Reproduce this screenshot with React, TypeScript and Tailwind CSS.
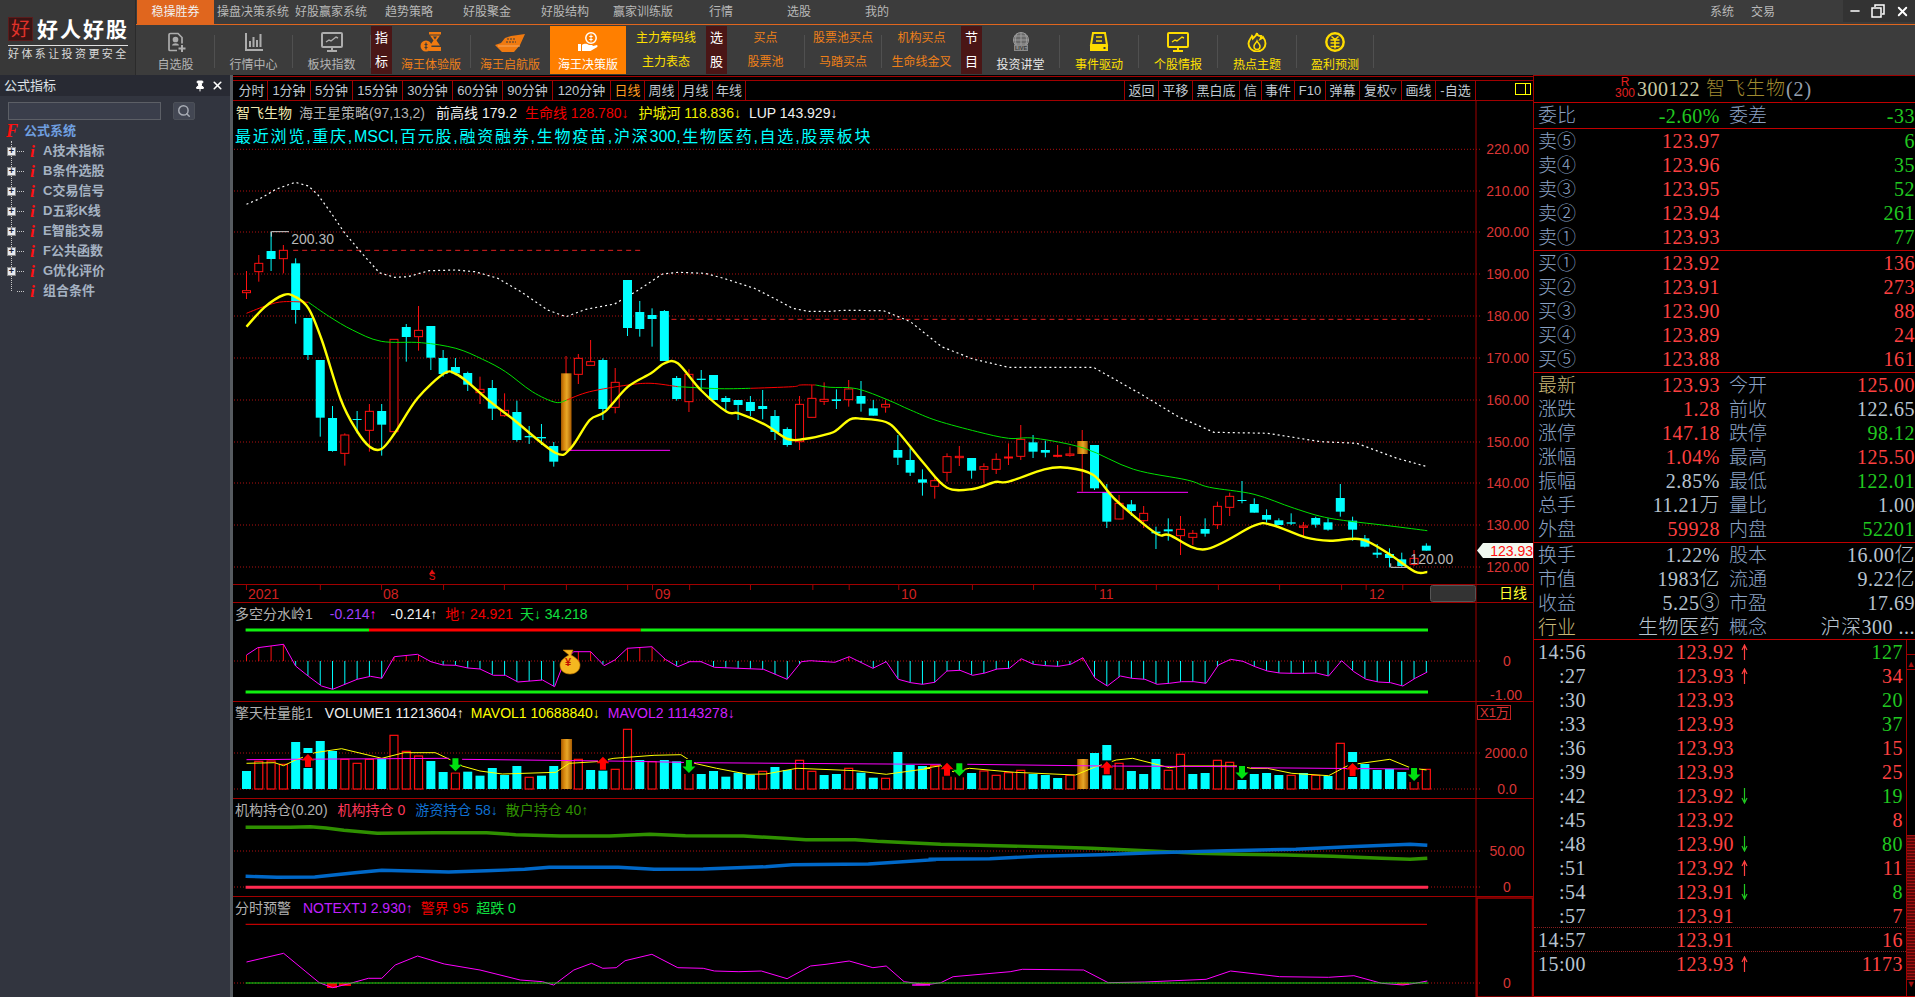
import { Minus, X as XIcon, Pin, Search } from "lucide-react";

// zoom -> page coords
const xi = (i: number) => 246.5 + 12.29 * i;
const X4 = (x: number) => 230 + x / 2.613;
const X5 = (x: number) => 830 + x / 2.24;
const X8 = (x: number) => 230 + x / 2.24;
const X9 = (x: number) => 900 + x / 2.45;
const M = (y: number) => 100 + y / 3;
const S = (y: number) => 600 + y / 3;

type P = [number, number];
const toPts = (a: number[], fx: (n: number) => number, fy: (n: number) => number) => {
  const out: P[] = [];
  for (let i = 0; i < a.length; i += 2) out.push([fx(a[i]), fy(a[i + 1])]);
  return out;
};
const str = (p: P[]) => p.map((q) => `${q[0].toFixed(1)},${q[1].toFixed(1)}`).join(" ");
// catmull-rom through the read-off points
const smooth = (p: P[]) => {
  let d = `M${p[0][0].toFixed(1)} ${p[0][1].toFixed(1)}`;
  for (let i = 0; i < p.length - 1; i++) {
    const a = p[i - 1] ?? p[i];
    const b = p[i];
    const c = p[i + 1];
    const e = p[i + 2] ?? c;
    d += ` C${(b[0] + (c[0] - a[0]) / 6).toFixed(1)} ${(b[1] + (c[1] - a[1]) / 6).toFixed(1)} ${(c[0] - (e[0] - b[0]) / 6).toFixed(1)} ${(c[1] - (e[1] - b[1]) / 6).toFixed(1)} ${c[0].toFixed(1)} ${c[1].toFixed(1)}`;
  }
  return d;
};
const interp = (p: P[], x: number) => {
  for (let i = 1; i < p.length; i++) {
    if (x <= p[i][0]) {
      const t = (x - p[i - 1][0]) / (p[i][0] - p[i - 1][0] || 1);
      return p[i - 1][1] + t * (p[i][1] - p[i - 1][1]);
    }
  }
  return p[p.length - 1][1];
};

// top, bottom, wick hi, wick lo, 0 red / 1 cyan / 2 orange
const candles: number[][] = [
  [572, 578, 513, 597, 0], [490, 515, 465, 545, 0], [453, 477, 395, 513, 1], [451, 476, 435, 520, 0],
  [490, 630, 475, 671, 1], [654, 765, 654, 780, 1], [780, 953, 780, 1010, 1], [954, 1053, 918, 1055, 1],
  [1005, 1060, 1000, 1097, 0], [957, 960, 933, 1000, 1], [934, 991, 912, 1055, 0], [933, 974, 912, 1067, 1],
  [718, 995, 718, 995, 0], [681, 711, 672, 785, 1], [691, 710, 618, 752, 0], [678, 773, 678, 810, 1],
  [774, 822, 750, 830, 1], [801, 820, 774, 822, 1], [819, 854, 815, 873, 1], [868, 878, 830, 912, 0],
  [864, 926, 840, 960, 1], [931, 947, 880, 950, 0], [936, 1020, 902, 1025, 1], [1008, 1012, 978, 1032, 1],
  [1011, 1015, 972, 1035, 1], [1038, 1085, 1026, 1100, 1], [820, 1052, 768, 1052, 2], [775, 823, 762, 852, 0],
  [785, 796, 720, 796, 0], [780, 927, 775, 960, 1], [847, 922, 804, 940, 0], [540, 684, 540, 708, 1],
  [636, 687, 603, 710, 1], [645, 657, 625, 740, 1], [633, 783, 630, 783, 1], [834, 897, 828, 902, 1],
  [823, 905, 808, 936, 0], [836, 840, 810, 870, 1], [825, 900, 825, 900, 1], [894, 906, 888, 935, 1],
  [900, 915, 900, 960, 1], [906, 933, 888, 948, 1], [918, 927, 870, 958, 1], [948, 996, 930, 1020, 1],
  [987, 1035, 982, 1040, 1], [913, 1025, 888, 1050, 0], [895, 952, 855, 952, 0], [898, 904, 847, 915, 0],
  [898, 903, 868, 927, 1], [867, 899, 840, 920, 0], [888, 911, 843, 935, 1], [925, 947, 900, 947, 1],
  [913, 921, 900, 938, 0], [1050, 1073, 1005, 1095, 1], [1080, 1118, 1045, 1128, 1], [1138, 1148, 1108, 1187, 1],
  [1142, 1159, 1130, 1196, 0], [1070, 1117, 1060, 1145, 0], [1069, 1073, 1038, 1098, 0], [1074, 1112, 1074, 1136, 1],
  [1100, 1108, 1090, 1150, 0], [1078, 1108, 1060, 1122, 0], [1071, 1073, 1030, 1095, 0], [1018, 1069, 975, 1080, 0],
  [1027, 1055, 1005, 1074, 1], [1050, 1058, 1022, 1072, 1], [1066, 1069, 1035, 1072, 0], [1062, 1066, 1040, 1070, 0],
  [1023, 1062, 990, 1175, 2], [1035, 1165, 1035, 1170, 1], [1176, 1265, 1152, 1284, 1], [1210, 1257, 1185, 1258, 0],
  [1213, 1233, 1200, 1248, 1], [1240, 1262, 1218, 1284, 0], [1295, 1300, 1280, 1347, 1], [1288, 1294, 1255, 1322, 1],
  [1288, 1307, 1248, 1365, 0], [1300, 1312, 1290, 1335, 0], [1287, 1301, 1255, 1310, 1], [1219, 1274, 1205, 1287, 0],
  [1189, 1222, 1178, 1248, 0], [1200, 1203, 1143, 1210, 1], [1212, 1238, 1195, 1238, 1], [1245, 1259, 1228, 1268, 1],
  [1261, 1275, 1255, 1275, 1], [1267, 1271, 1240, 1275, 1], [1278, 1282, 1266, 1310, 0], [1254, 1274, 1250, 1283, 1],
  [1267, 1289, 1255, 1292, 1], [1194, 1235, 1152, 1250, 1], [1262, 1289, 1250, 1322, 1], [1315, 1340, 1305, 1342, 1],
  [1358, 1364, 1332, 1374, 1], [1362, 1374, 1345, 1402, 1], [1378, 1398, 1358, 1400, 1], [1375, 1393, 1350, 1398, 0],
  [1337, 1352, 1330, 1352, 1],
];

const whiteLine = [
  ...toPts([43, 313, 80, 295, 120, 268, 170, 247, 205, 258, 230, 285, 265, 340, 300, 400, 345, 460, 390, 518, 430, 532, 465, 530, 520, 512, 590, 510, 640, 515, 700, 535, 760, 575, 830, 630, 878, 650, 930, 628, 1005, 612, 1060, 575, 1130, 522, 1170, 517, 1240, 520, 1290, 535, 1370, 565, 1430, 600, 1470, 625, 1510, 634, 1568, 634], X4, M),
  ...toPts([30, 631, 120, 632, 180, 665, 250, 740, 320, 777, 400, 802, 590, 802, 700, 885, 780, 950, 860, 997, 980, 1000, 1100, 1025, 1180, 1030, 1270, 1075, 1338, 1100], X5, M),
];
const yellowLine = [
  ...toPts([43, 680, 90, 622, 140, 585, 170, 590, 205, 625, 240, 720, 290, 900, 330, 990, 365, 1040, 396, 1047, 430, 1000, 490, 895, 560, 820, 590, 822, 620, 845, 680, 905, 740, 958, 850, 1058, 890, 1045, 940, 960, 980, 935, 1040, 860, 1100, 820, 1135, 790, 1170, 790, 1230, 870, 1298, 935, 1330, 940, 1400, 975, 1457, 1017, 1500, 1017, 1568, 1000], X4, M),
  ...toPts([15, 990, 45, 958, 70, 956, 125, 966, 155, 1000, 210, 1090, 262, 1163, 320, 1167, 370, 1146, 400, 1145, 480, 1108, 530, 1103, 590, 1125, 640, 1200, 730, 1300, 760, 1305, 840, 1348, 950, 1277, 990, 1275, 1065, 1312, 1120, 1322, 1190, 1318, 1250, 1360, 1310, 1415, 1338, 1416], X5, M),
];
const maParts: { c: string; p: P[] }[] = [
  { c: "#ff0000", p: toPts([43, 640, 100, 615, 140, 605, 205, 607], X4, M) },
  { c: "#00e000", p: toPts([205, 607, 260, 650, 320, 690, 395, 724, 500, 728, 590, 745, 660, 778, 720, 815, 790, 875, 850, 907, 880, 900], X4, M) },
  { c: "#ff0000", p: toPts([880, 900, 940, 875, 1040, 855, 1100, 850, 1170, 860], X4, M) },
  { c: "#00e000", p: toPts([1170, 860, 1280, 866, 1360, 865], X4, M) },
  { c: "#ff0000", p: toPts([1360, 865, 1470, 860, 1490, 855, 1530, 855], X4, M) },
  {
    c: "#00e000",
    p: [
      ...toPts([1530, 855, 1568, 862], X4, M),
      ...toPts([60, 866, 130, 900, 180, 930, 240, 962, 330, 995, 400, 1015, 460, 1015, 570, 1045, 680, 1108, 800, 1140, 850, 1162, 950, 1183, 1040, 1225, 1120, 1255, 1250, 1277, 1338, 1292], X5, M),
    ],
  },
];

const priceLevels: [number, string][] = [
  [149.3, "220.00"], [191, "210.00"], [232, "200.00"], [274, "190.00"], [316, "180.00"], [358, "170.00"],
  [400, "160.00"], [442, "150.00"], [483, "140.00"], [525, "130.00"], [567, "120.00"],
];

function MainChart() {
  return (
    <svg viewBox="233 101 1300 483" className="block h-[483px] w-[1300px]">
      <defs>
        <linearGradient id="gold" x1="0" x2="1" y1="0" y2="0">
          <stop offset="0" stopColor="#a85a00" />
          <stop offset="0.3" stopColor="#d98a10" />
          <stop offset="0.55" stopColor="#e8a828" />
          <stop offset="1" stopColor="#a85a00" />
        </linearGradient>
      </defs>
      {priceLevels.map(([y, t]) => (
        <g key={t}>
          <line x1={234} x2={1482} y1={y} y2={y} stroke="#b01010" strokeDasharray="1 2" />
          <text x={1529} y={y + 5} textAnchor="end" fontSize={14} fill="#d83535">{t}</text>
        </g>
      ))}
      <line x1={1476} x2={1476} y1={101} y2={584} stroke="#a00000" />
      <line x1={X4(165)} x2={X4(1080)} y1={M(451)} y2={M(451)} stroke="#e02020" strokeDasharray="5 4" />
      <line x1={X4(1130)} x2={X5(1345)} y1={M(658)} y2={M(658)} stroke="#e02020" strokeDasharray="5 4" />
      <polyline points={str(whiteLine)} fill="none" stroke="#ffffff" strokeWidth={1.2} strokeDasharray="2 3" />
      {candles.map((c, i) => {
        const x = xi(i);
        const top = M(c[0]);
        const bot = M(c[1]);
        const col = c[4] === 1 ? "#00ffff" : "#ff1010";
        return (
          <g key={i}>
            <line x1={x} x2={x} y1={M(c[2])} y2={M(c[3])} stroke={col} />
            {c[4] === 1 && <rect x={x - 4.5} y={top} width={9} height={Math.max(bot - top, 1)} fill="#00ffff" />}
            {c[4] === 0 && <rect x={x - 4} y={top} width={8} height={Math.max(bot - top, 1)} fill="#000" stroke="#ff1010" />}
            {c[4] === 2 && <rect x={x - 5} y={top} width={10.5} height={bot - top} fill="url(#gold)" />}
          </g>
        );
      })}
      <line x1={X4(880)} x2={X4(1150)} y1={M(1051)} y2={M(1051)} stroke="#ff00ff" />
      <line x1={X5(553)} x2={X5(802)} y1={M(1177)} y2={M(1177)} stroke="#ff00ff" />
      {maParts.map((m, i) => (
        <path key={i} d={smooth(m.p)} fill="none" stroke={m.c} />
      ))}
      <path d={smooth(yellowLine)} fill="none" stroke="#ffff00" strokeWidth={2.4} />
      <polyline points={`${X4(108)},${M(410)} ${X4(108)},${M(395)} ${X4(154)},${M(395)}`} fill="none" stroke="#d0d0d0" />
      <text x={X4(160)} y={M(431)} fontSize={14} fill="#b8b8b8">200.30</text>
      <polyline points={`${X5(1256)},${M(1390)} ${X5(1256)},${M(1402)} ${X5(1292)},${M(1402)}`} fill="none" stroke="#d0d0d0" />
      <text x={X5(1300)} y={M(1392)} fontSize={14} fill="#b8b8b8">120.00</text>
      <path d={`M${X4(528)} ${M(1408)} l3 5 h-6 z`} fill="#e01010" />
      <text x={X4(528)} y={M(1440)} textAnchor="middle" fontSize={10} fill="#e01010">S</text>
      <path d="M1477 550.5 l6 -7.5 h50 v15 h-50 z" fill="#f0f8f0" />
      <text x={1533} y={555.5} textAnchor="end" fontSize={14} fill="#ff1010">123.93</text>
    </svg>
  );
}

function TimeAxis() {
  const ticks = [X4(43), X4(236), X4(396), X4(558), X4(717), X4(879), X4(1039), X4(1104), X4(1201), X4(1360), X4(1523), X5(43), X5(154), X5(319), X5(456), X5(595), X5(731), X5(870), X5(1007), X5(1146), X5(1201), X5(1283)];
  const labels: [number, string][] = [[248, "2021"], [383, "08"], [655, "09"], [901, "10"], [1099, "11"], [1369, "12"]];
  return (
    <div className="relative h-[19px] w-[1300px] border-y border-[#a00000]">
      <svg viewBox="233 585 1300 17" className="block h-[17px] w-[1300px]">
        {ticks.map((t, i) => (
          <line key={i} x1={t} x2={t} y1={585} y2={590} stroke="#a00000" />
        ))}
        {labels.map(([x, t]) => (
          <text key={t} x={x} y={599} fontSize={14} fill="#d02020">{t}</text>
        ))}
        <line x1={1476} x2={1476} y1={585} y2={602} stroke="#a00000" />
        <rect x={1430.5} y={585.5} width={45} height={16} rx={2} fill="#333" stroke="#555" />
      </svg>
      <span className="absolute right-[6px] top-0 text-[14px] leading-[17px] text-[#ffff30]">日线</span>
    </div>
  );
}

const waterA = [37, 165, 62, 143, 120, 133, 147, 198, 175, 228, 205, 258, 230, 268, 285, 238, 315, 229, 340, 235, 368, 170, 420, 163, 450, 185, 477, 195, 505, 196, 533, 204, 560, 207, 590, 226, 617, 226, 645, 246, 700, 240, 727, 260, 750, 180, 770, 155, 808, 155, 838, 197, 862, 180, 890, 145, 945, 140, 975, 178, 1003, 200, 1030, 185, 1055, 185, 1085, 202, 1140, 205, 1195, 208, 1248, 238, 1280, 185, 1300, 182, 1355, 187, 1387, 170, 1440, 205, 1470, 185, 1497, 238, 1525, 248];
const waterB = [55, 253, 85, 247, 115, 213, 147, 211, 178, 226, 208, 219, 238, 207, 268, 205, 297, 176, 327, 193, 357, 197, 388, 199, 418, 193, 448, 173, 478, 235, 508, 258, 540, 228, 568, 235, 600, 238, 630, 253, 660, 250, 690, 245, 720, 245, 750, 250, 780, 195, 810, 178, 840, 184, 870, 200, 900, 213, 930, 219, 960, 220, 990, 220, 1020, 219, 1050, 228, 1082, 182, 1112, 215, 1142, 238, 1172, 246, 1202, 248, 1232, 258, 1262, 235, 1292, 216];

function Pane({ h, legend, children, last }: { h: number; legend: React.ReactNode; children: React.ReactNode; last?: boolean }) {
  const top = { 99: 603, 97: 702, 98: 799, 100: 897 }[h] as number;
  return (
    <div className={`relative w-[1300px] ${last ? "" : "border-b border-[#a00000]"}`} style={{ height: h }}>
      <svg viewBox={`233 ${top} 1300 ${h}`} className="block w-[1300px]" style={{ height: h }}>
        <line x1={1476} x2={1476} y1={top} y2={top + h} stroke="#a00000" />
        {children}
      </svg>
      <div className="absolute left-[2px] top-[2px] flex h-[19px] items-center whitespace-nowrap text-[14px]">{legend}</div>
    </div>
  );
}

const AxisText = ({ x = 1522, y, t, anchor = "end" }: { x?: number; y: number; t: string; anchor?: "end" | "middle" }) => (
  <text x={x} y={y + 5} textAnchor={anchor} fontSize={14} fill="#d83535">{t}</text>
);
const Dotted = ({ y, x2 = 1482 }: { y: number; x2?: number }) => (
  <line x1={234} x2={x2} y1={y} y2={y} stroke="#b01010" strokeDasharray="1 2" />
);

function WaterPane() {
  const pts = [...toPts(waterA, X8, S), ...toPts(waterB, X9, S)];
  return (
    <Pane
      h={99}
      legend={
        <>
          <span className="text-[#b0b0b0]">多空分水岭1</span>
          <span className="ml-[17px] text-[#a040ff]">-0.214<span className="text-[#ff00ff]">↑</span></span>
          <span className="ml-[14px] text-[#f0f0f0]">-0.214↑</span>
          <span className="ml-[8px] text-[#f00000]">地↑ 24.921</span>
          <span className="ml-[7px] text-[#10e040]">天↓ 34.218</span>
        </>
      }
    >
      <Dotted y={661} />
      {candles.map((_, i) => {
        const y = interp(pts, xi(i));
        return <line key={i} x1={xi(i)} x2={xi(i)} y1={661} y2={y} stroke={y < 661 ? "#ff1010" : "#00ffff"} />;
      })}
      <polyline points={str(pts)} fill="none" stroke="#ff00ff" />
      <line x1={245.6} x2={369} y1={630} y2={630} stroke="#10f010" strokeWidth={3} />
      <line x1={369} x2={640.7} y1={630} y2={630} stroke="#ff0000" strokeWidth={3} />
      <line x1={640.7} x2={1428} y1={630} y2={630} stroke="#10f010" strokeWidth={3} />
      <line x1={245.6} x2={1428} y1={692} y2={692} stroke="#10f010" strokeWidth={3} />
      <g transform="translate(568 660)">
        <path d="M-5 -10 h10 l-2 5 c6 3 9 7 9 10 c0 6 -5 9 -10 9 c-5 0 -10 -3 -10 -9 c0 -3 3 -7 9 -10 z" fill="#f5b820" stroke="#c87a00" strokeWidth={0.6} />
        <text x={0} y={6} textAnchor="middle" fontSize={11} fontWeight={700} fill="#c01000">¥</text>
      </g>
      <AxisText x={1507} y={661} t="0" anchor="middle" />
      <AxisText y={695} t="-1.00" />
    </Pane>
  );
}

// top y in zoom units, 0 red / 1 cyan / 2 orange
const vols: [number, number][] = [
  [513, 1], [484, 0], [483, 0], [493, 0], [426, 1], [444, 1], [423, 1], [453, 1], [478, 0], [490, 0], [478, 0], [476, 1],
  [406, 0], [454, 0], [468, 0], [483, 1], [516, 1], [519, 0], [515, 1], [527, 1], [504, 1], [525, 1], [498, 1], [532, 0],
  [527, 1], [498, 1], [417, 2], [478, 0], [510, 1], [510, 1], [508, 0], [388, 0], [480, 1], [485, 0], [480, 1], [484, 1],
  [519, 0], [522, 1], [513, 1], [530, 1], [518, 1], [524, 1], [514, 0], [501, 1], [510, 1], [481, 0], [514, 0], [525, 1],
  [522, 1], [505, 0], [518, 1], [533, 1], [535, 0], [456, 1], [495, 1], [498, 1], [497, 0], [525, 0], [528, 0], [519, 1],
  [513, 0], [526, 0], [518, 0], [511, 0], [522, 1], [525, 1], [534, 1], [526, 0], [477, 2], [459, 1], [435, 1], [490, 0],
  [513, 1], [522, 1], [477, 1], [511, 0], [463, 0], [522, 1], [519, 1], [481, 0], [487, 0], [537, 1], [522, 1], [519, 1],
  [525, 1], [526, 0], [519, 1], [526, 0], [528, 1], [430, 0], [456, 1], [492, 1], [510, 1], [507, 1], [516, 1], [543, 0], [508, 0],
];
const arrows: [number, number, number][] = [
  [5, 462, 1], [29, 470, 1], [57, 488, 1], [70, 484, 1], [90, 489, 1],
  [17, 475, 0], [36, 480, 0], [58, 490, 0], [81, 498, 0], [95, 504, 0],
];

function VolumePane() {
  const yellow = [
    ...toPts([37, 490, 100, 488, 120, 497, 147, 480, 190, 458, 250, 446, 340, 475, 390, 458, 460, 458, 495, 480, 520, 498, 560, 513, 610, 522, 730, 517, 760, 490, 820, 485, 860, 475, 950, 466, 1010, 464, 1040, 490, 1090, 505, 1160, 523, 1200, 522, 1270, 505, 1400, 512, 1470, 523, 1568, 505], X8, S),
    ...toPts([60, 505, 100, 497, 130, 515, 170, 505, 280, 517, 430, 525, 480, 500, 530, 480, 570, 475, 660, 503, 690, 498, 830, 498, 860, 505, 900, 505, 960, 520, 1050, 527, 1100, 495, 1130, 490, 1200, 478, 1250, 503, 1290, 510], X9, S),
  ];
  const mags = [
    toPts([37, 479, 135, 478, 490, 475], X8, S),
    [...toPts([520, 478, 900, 484, 1045, 488, 1568, 493], X8, S), ...toPts([100, 493], X9, S)],
    toPts([165, 493, 500, 498, 830, 500], X9, S),
    toPts([860, 503, 1250, 507], X9, S),
  ];
  return (
    <Pane
      h={97}
      legend={
        <>
          <span className="text-[#b0b0b0]">擎天柱量能1</span>
          <span className="ml-[12px] text-[#f0f0f0]">VOLUME1 11213604↑</span>
          <span className="ml-[7px] text-[#ffff00]">MAVOL1 10688840↓</span>
          <span className="ml-[8px] text-[#d020ff]">MAVOL2 11143278↓</span>
        </>
      }
    >
      <Dotted y={753} />
      <Dotted y={789} />
      {vols.map(([t, c], i) => {
        const x = xi(i);
        const y = S(t);
        if (c === 1) return <rect key={i} x={x - 4.5} y={y} width={9} height={789 - y} fill="#00ffff" />;
        if (c === 2) return <rect key={i} x={x - 5} y={y} width={11} height={789 - y} fill="url(#gold)" />;
        return <rect key={i} x={x - 4} y={y} width={8} height={789 - y} fill="#000" stroke="#ff1010" strokeWidth={1.2} />;
      })}
      <polyline points={str(yellow)} fill="none" stroke="#ffff00" />
      {mags.map((m, i) => (
        <polyline key={i} points={str(m)} fill="none" stroke="#ff00ff" />
      ))}
      {arrows.map(([i, t, up]) => {
        const x = xi(i);
        const y = S(t);
        const d = up
          ? `M${x} ${y} l6.5 6.5 h-3.5 v6.5 h-6 v-6.5 h-3.5 z`
          : `M${x} ${y + 13} l6.5 -6.5 h-3.5 v-6.5 h-6 v6.5 h-3.5 z`;
        return (
          <g key={i}>
            <rect x={x - 5} y={y - 1} width={10} height={15} fill="#000" />
            <path d={d} fill={up ? "#ff0000" : "#00e010"} />
          </g>
        );
      })}
      <AxisText x={1506} y={753} t="2000.0" anchor="middle" />
      <AxisText x={1507} y={789} t="0.0" anchor="middle" />
      <rect x={1477.5} y={705.5} width={33} height={14} fill="none" stroke="#c02020" />
      <text x={1480} y={717} fontSize={13} fill="#d83535">X1万</text>
    </Pane>
  );
}

function HoldPane() {
  const green = [
    ...toPts([35, 682, 135, 682, 180, 680, 215, 684, 255, 691, 330, 700, 460, 698, 575, 698, 640, 704, 740, 708, 850, 708, 940, 703, 1020, 707, 1150, 708, 1240, 715, 1290, 719, 1400, 719, 1450, 724, 1568, 731], X8, S),
    ...toPts([100, 733, 240, 737, 370, 741, 470, 745, 615, 753, 730, 760, 830, 763, 945, 765, 1060, 769, 1180, 775, 1250, 778, 1292, 775], X9, S),
  ];
  const blue = [
    ...toPts([35, 829, 105, 832, 190, 831, 280, 818, 340, 811, 490, 816, 575, 812, 660, 808, 715, 802, 870, 802, 950, 808, 1060, 807, 1200, 800, 1260, 794, 1430, 792, 1568, 780], X8, S),
    ...toPts([70, 778, 220, 776, 340, 769, 490, 764, 620, 758, 800, 752, 970, 748, 1100, 740, 1250, 733, 1292, 736], X9, S),
  ];
  return (
    <Pane
      h={98}
      legend={
        <>
          <span className="text-[#b0b0b0]">机构持仓(0.20)</span>
          <span className="ml-[10px] text-[#ff3858]">机构持仓 0</span>
          <span className="ml-[10px] text-[#1070d0]">游资持仓 58↓</span>
          <span className="ml-[8px] text-[#2f8f00]">散户持仓 40↑</span>
        </>
      }
    >
      <Dotted y={851} />
      <Dotted y={887} />
      <polyline points={str(green)} fill="none" stroke="#2f9000" strokeWidth={3.4} />
      <polyline points={str(blue)} fill="none" stroke="#0068c8" strokeWidth={3.4} />
      <line x1={245.6} x2={1428} y1={887.3} y2={887.3} stroke="#ff2a50" strokeWidth={3} />
      <AxisText x={1507} y={851} t="50.00" anchor="middle" />
      <AxisText x={1507} y={887} t="0" anchor="middle" />
    </Pane>
  );
}

function AlertPane() {
  const mag = [
    ...toPts([37, 1086, 120, 1060, 170, 1115, 200, 1148, 230, 1163, 270, 1150, 310, 1135, 340, 1135, 370, 1095, 420, 1068, 480, 1092, 560, 1110, 650, 1140, 700, 1145, 725, 1155, 770, 1110, 810, 1090, 835, 1105, 865, 1103, 885, 1082, 945, 1063, 1003, 1103, 1060, 1105, 1085, 1113, 1140, 1115, 1190, 1113, 1248, 1136, 1300, 1098, 1335, 1093, 1387, 1083, 1440, 1103, 1470, 1098, 1510, 1145, 1568, 1155], X8, S),
    ...toPts([30, 1155, 60, 1155, 100, 1148, 130, 1130, 270, 1115, 300, 1108, 450, 1110, 510, 1148, 600, 1146, 750, 1138, 810, 1113, 930, 1130, 1050, 1132, 1112, 1127, 1180, 1150, 1232, 1155, 1262, 1150, 1292, 1143], X9, S),
  ];
  return (
    <Pane
      h={100}
      last
      legend={
        <>
          <span className="text-[#b0b0b0]">分时预警</span>
          <span className="ml-[12px] text-[#c020ff]">NOTEXTJ 2.930↑</span>
          <span className="ml-[8px] text-[#f00000]">警界 95</span>
          <span className="ml-[8px] text-[#10e040]">超跌 0</span>
        </>
      }
    >
      <line x1={245.6} x2={1427} y1={924.3} y2={924.3} stroke="#f00000" />
      <Dotted y={983} />
      <rect x={327} y={983} width={10} height={5} fill="#f00000" />
      <rect x={339} y={983} width={12} height={3} fill="#f00000" />
      <rect x={916} y={983} width={14} height={2} fill="#f00000" />
      <rect x={1397} y={983} width={12} height={2} fill="#f00000" />
      <polyline points={str(mag)} fill="none" stroke="#ff00ff" />
      <line x1={245.6} x2={1428} y1={983} y2={983} stroke="#10e010" />
      <rect x={1477} y={898} width={55.5} height={99} fill="none" stroke="#a00000" strokeWidth={1.5} />
      <AxisText x={1507} y={983} t="0" anchor="middle" />
    </Pane>
  );
}

const periods = [
  ["分时", 32], ["1分钟", 43], ["5分钟", 42], ["15分钟", 50], ["30分钟", 50], ["60分钟", 50], ["90分钟", 50],
  ["120分钟", 58], ["日线", 34], ["周线", 34], ["月线", 34], ["年线", 33],
] as [string, number][];
const tools = [
  ["返回", 34], ["平移", 34], ["黑白底", 47], ["信", 22], ["事件", 33], ["F10", 31], ["弹幕", 34], ["复权▿", 42], ["画线", 34], ["-自选", 40],
] as [string, number][];

function PeriodBar() {
  return (
    <div className="flex h-[20px] w-[1300px] border-b border-[#a00000] text-[13px] leading-[19px] text-[#c0c8d0]">
      <div className="w-[3px]" />
      {periods.map(([t, w]) => (
        <div key={t} className={`border-r border-[#a00000] text-center ${t === "日线" ? "text-[#ff9a20]" : ""}`} style={{ width: w }}>
          {t}
        </div>
      ))}
      <div className="flex-1" />
      <div className="flex border-l border-[#a00000]">
        {tools.map(([t, w]) => (
          <div key={t} className="border-r border-[#a00000] text-center" style={{ width: w }}>
            {t}
          </div>
        ))}
      </div>
      <div className="relative w-[57px]">
        <div className="absolute right-[2px] top-[2px] flex h-[12px] w-[16px] justify-end border border-[#ffff00]">
          <div className="h-full w-[5px] border-l border-[#ffff00]" />
        </div>
      </div>
    </div>
  );
}

const treeRows = ["A技术指标", "B条件选股", "C交易信号", "D五彩K线", "E智能交易", "F公共函数", "G优化评价", "组合条件"];

function Sidebar() {
  return (
    <aside className="flex w-[230px] flex-col bg-[#32353f]">
      <div className="flex h-[21px] items-center bg-[#282a33] pl-[4px] pr-[6px] text-[13px] text-[#dfe3e8]">
        <span className="flex-1">公式指标</span>
        <Pin size={12} className="mr-[5px] text-white" fill="#fff" />
        <XIcon size={13} strokeWidth={3} className="text-white" />
      </div>
      <div className="mt-[6px] flex items-center pl-[8px]">
        <div className="h-[18px] w-[153px] border border-[#5c5f66] bg-[#3a3e4b]" />
        <div className="ml-[12px] flex h-[18px] w-[22px] items-center justify-center rounded-[2px] border border-[#4c5058] bg-[#434753]">
          <Search size={14} strokeWidth={2.5} className="text-[#a8acb4]" />
        </div>
      </div>
      <div className="relative mt-[1px]">
        <div className="absolute bottom-[10px] left-[11px] top-[20px] border-l border-dotted border-[#c8c8c8]" />
        <div className="flex h-[20px] items-center pl-[6px] text-[13px] font-bold text-[#6f9fe0]">
          <span className="w-[18px] font-['Liberation_Serif',serif] text-[18px] font-bold italic leading-none text-[#ff1010]">F</span>
          <span>公式系统</span>
        </div>
        {treeRows.map((t, i) => (
          <div key={t} className="relative flex h-[20px] items-center pl-[7px] text-[13px] font-bold text-[#a5b2c2]">
            {i < 7 ? (
              <span className="z-10 flex h-[9px] w-[9px] items-center justify-center border border-[#888] bg-[#e8eaf0] text-[9px] leading-none text-[#223]">+</span>
            ) : (
              <span className="w-[9px]" />
            )}
            <span className="ml-[1px] w-[7px] border-t border-dotted border-[#c8c8c8]" />
            <span className="ml-[6px] w-[13px] font-['Liberation_Serif',serif] text-[17px] font-bold italic leading-none text-[#ff1010]">i</span>
            <span>{t}</span>
          </div>
        ))}
      </div>
    </aside>
  );
}

const menus: [string, number][] = [
  ["操盘决策系统", 78], ["好股赢家系统", 78], ["趋势策略", 78], ["好股聚金", 78], ["好股结构", 78], ["赢家训练版", 78], ["行情", 78], ["选股", 78], ["我的", 78],
];

const GRAY = "#adadad";
const YEL = "#ffdc00";
const ORG = "#f07a10";

const DocIcon = () => (
  <svg viewBox="0 0 20 20" className="h-[20px] w-[20px]" fill="none" stroke={GRAY} strokeWidth={1.7}>
    <path d="M3 14V3a1.5 1.5 0 0 1 1.5-1.5H12l4 4v6M3 14v3.5a1 1 0 0 0 1 1h7" />
    <circle cx={9.5} cy={7.5} r={2} fill={GRAY} />
    <path d="M6 13.5c.5-3 6.5-3 7 0z" fill={GRAY} stroke="none" />
    <path d="M16 13v7M12.5 16.5h7" strokeWidth={2} />
  </svg>
);
const BarsIcon = () => (
  <svg viewBox="0 0 20 20" className="h-[20px] w-[20px]" fill="none" stroke={GRAY}>
    <path d="M2 1v17h17" strokeWidth={2} />
    <path d="M6 9v6M9.5 5v10M13 8v7M16.5 2v13" strokeWidth={2} />
  </svg>
);
const MonitorIcon = ({ c, line = c }: { c: string; line?: string }) => (
  <svg viewBox="0 0 22 20" className="h-[20px] w-[22px]" fill="none" stroke={c} strokeWidth={2}>
    <rect x={1} y={1} width={20} height={14} rx={1} />
    <path d="M5 10l3-2 2 1 5-4 2 1" stroke={line} strokeWidth={1.4} />
    <path d="M11 15v3M6 19h10" />
  </svg>
);
const HourIcon = () => (
  <svg viewBox="0 0 22 20" className="h-[20px] w-[22px]" fill={ORG}>
    <rect x={9} y={0} width={12} height={2.5} />
    <path d="M10 3.5h10l-3.5 5 3.5 5H10l3.5-5z" />
    <path d="M13 4.5h4l-2 3z" fill="#3c3c3c" />
    <rect x={9} y={15} width={12} height={4} />
    <circle cx={6} cy={14} r={5.5} />
    <path d="M6 10.5v7M4.5 12.5h3M4.5 15.5h3" stroke="#3c3c3c" strokeWidth={1.2} />
  </svg>
);
const ShipIcon = () => (
  <svg viewBox="0 0 30 18" className="h-[18px] w-[30px]" fill={ORG}>
    <path d="M0 11l6-2 4-5 6-2 14-2-5 11-6 7H7z" />
    <path d="M12 5h8M11 8h10" stroke="#3c3c3c" strokeWidth={1} strokeDasharray="2 1" />
    <path d="M3 12h22" stroke="#f8a860" strokeWidth={1} />
  </svg>
);
const HandIcon = () => (
  <svg viewBox="0 0 22 20" className="h-[20px] w-[22px]">
    <circle cx={14} cy={6} r={5.2} fill="none" stroke="#fff" strokeWidth={1.5} />
    <path d="M14 2.5v7M12.3 4.5h3.4M12.3 7.5h3.4" stroke="#fff" strokeWidth={1} />
    <path d="M1 12h3v7H1zM5 13c3-2 5-1 7 0h3c1 0 1 2 0 2h-3l8-2c1 1 .5 2-.5 2.500l-6 3.500H5z" fill="#fff" />
  </svg>
);
const GlobeIcon = () => (
  <svg viewBox="0 0 20 20" className="h-[20px] w-[20px]" fill="none" stroke="#9c9c9c" strokeWidth={1}>
    <circle cx={10} cy={8} r={7.5} fill="#6a6a6a" />
    <path d="M2.5 8h15M3.5 4h13M3.500 12h13M10 .5v15M6 1.500c-2 4-2 9 0 13M14 1.500c2 4 2 9 0 13" />
    <rect x={3} y={13} width={14} height={6} fill="#8a8a8a" stroke="none" />
    <text x={10} y={18} textAnchor="middle" fontSize={5.5} fontWeight={700} fill="#3c3c3c" stroke="none">LIVE</text>
  </svg>
);
const TabletIcon = () => (
  <svg viewBox="0 0 20 20" className="h-[20px] w-[20px]" fill="none" stroke={YEL} strokeWidth={2}>
    <path d="M4 1h12l2 12H2z" />
    <path d="M7 5h6M7 9h6" strokeWidth={1.4} />
    <rect x={1} y={13} width={18} height={6} fill={YEL} stroke="none" />
    <rect x={14.500} y={15} width={2} height={2} fill="#3c3c3c" stroke="none" />
  </svg>
);
const FlameIcon = () => (
  <svg viewBox="0 0 20 20" className="h-[20px] w-[20px]" fill="none" stroke={YEL} strokeWidth={1.9}>
    <path d="M10 1c0 3 2 3 4 3 0 1 0 2-.500 3 1-.5 2-1 2.500-2 1.500 2 2.500 4 2.500 6.500a8.500 8 0 0 1-17 0C1.500 8 4 6.500 5 4c.7.8 1 1.700 1 2.500C8 5 9.500 3.500 10 1z" />
    <path d="M10 9c.8 2 3 3 3 5.500a3 3 0 0 1-6 0C7 12 9.200 11 10 9z" strokeWidth={1.5} />
  </svg>
);
const CoinIcon = () => (
  <svg viewBox="0 0 20 20" className="h-[20px] w-[20px]" fill="none" stroke={YEL}>
    <circle cx={10} cy={10} r={8.700} strokeWidth={2.4} />
    <path d="M6.500 4.500L10 7.500l3.500-3M5.500 8h9M5.500 11h9M5.500 14.500h9M10 7.500v9" strokeWidth={1.6} />
  </svg>
);

const Sep = () => <div className="mt-[10px] h-[33px] w-px self-start bg-[#505050]" />;

function IconItem({ w, icon, label, color, active }: { w: number; icon: React.ReactNode; label: string; color: string; active?: boolean }) {
  return (
    <div className={`flex h-[48px] flex-col items-center justify-between ${active ? "bg-[#ff7f00]" : ""} ${color}`} style={{ width: w }}>
      <div className="flex h-[26px] items-end">{icon}</div>
      <span className="pb-[1px] text-[12px] leading-[16px]">{label}</span>
    </div>
  );
}
const TwoLine = ({ w, a, b, color }: { w: number; a: string; b: string; color: string }) => (
  <div className={`flex h-[48px] flex-col items-center justify-around text-[12px] ${color}`} style={{ width: w }}>
    <span>{a}</span>
    <span>{b}</span>
  </div>
);
const Tag = ({ a, b, w = 21 }: { a: string; b: string; w?: number }) => (
  <div className="flex h-[48px] flex-col items-center justify-around bg-[#4a1616] text-[13px] text-white" style={{ width: w }}>
    <span>{a}</span>
    <span>{b}</span>
  </div>
);

function TopBar() {
  return (
    <header className="flex h-[75px] bg-[#3c3c3c] text-[12px]">
      <div className="flex w-[136px] flex-col border-r border-[#2b2b2b] bg-[#383838] pl-[8px] pt-[17px]">
        <div className="flex items-center">
          <span className="flex h-[24px] w-[25px] items-center justify-center border border-[#5a1c1c] bg-[#3a1414] text-[19px] leading-none text-[#e0322a]">好</span>
          <span className="ml-[4px] text-[21px] font-bold leading-none tracking-[2px] text-white">好人好股</span>
        </div>
        <div className="mt-[4px] h-px w-[120px] bg-[#e0e0e0]" />
        <span className="mt-[1px] text-[11px] leading-[14px] tracking-[2.4px] text-[#d8d8d8]">好体系让投资更安全</span>
      </div>
      <div className="flex flex-1 flex-col">
        <div className="flex h-[25px] items-center border-b border-[#e0661e] leading-[24px] text-[#b8b8b8]">
          <div className="ml-[1px] h-[24px] w-[77px] bg-[#e0661e] text-center text-[#f0f0f0]">稳操胜券</div>
          {menus.map(([t, w]) => (
            <div key={t} className="text-center" style={{ width: w }}>
              {t}
            </div>
          ))}
          <div className="flex-1" />
          <span className="mr-[17px]">系统</span>
          <span className="mr-[68px]">交易</span>
          <div className="flex h-[22px] w-[72px] items-center justify-around self-start bg-[#333] text-white">
            <Minus size={14} strokeWidth={2.5} />
            <svg viewBox="0 0 14 14" className="h-[14px] w-[14px]" fill="none" stroke="#fff" strokeWidth={1.5}>
              <path d="M4 3V1h9v9h-2" />
              <rect x={1} y={4} width={9} height={9} />
            </svg>
            <XIcon size={15} strokeWidth={3} />
          </div>
        </div>
        <div className="flex h-[50px] items-center pl-[1px]">
          <IconItem w={77} icon={<DocIcon />} label="自选股" color="text-[#b4b4b4]" />
          <Sep />
          <IconItem w={77} icon={<BarsIcon />} label="行情中心" color="text-[#b4b4b4]" />
          <Sep />
          <IconItem w={77} icon={<MonitorIcon c={GRAY} />} label="板块指数" color="text-[#b4b4b4]" />
          <Sep />
          <Tag a="指" b="标" />
          <IconItem w={78} icon={<HourIcon />} label="海王体验版" color="text-[#f08018]" />
          <Sep />
          <IconItem w={78} icon={<ShipIcon />} label="海王启航版" color="text-[#f08018]" />
          <div className="w-[1px]" />
          <IconItem w={76} icon={<HandIcon />} label="海王决策版" color="text-white" active />
          <TwoLine w={80} a="主力筹码线" b="主力表态" color="text-[#ffe000]" />
          <Tag a="选" b="股" />
          <TwoLine w={77} a="买点" b="股票池" color="text-[#f08018]" />
          <Sep />
          <TwoLine w={76} a="股票池买点" b="马踏买点" color="text-[#f08018]" />
          <Sep />
          <TwoLine w={79} a="机构买点" b="生命线金叉" color="text-[#f08018]" />
          <Tag a="节" b="目" />
          <IconItem w={77} icon={<GlobeIcon />} label="投资讲堂" color="text-[#e8e8e8]" />
          <Sep />
          <IconItem w={78} icon={<TabletIcon />} label="事件驱动" color="text-[#ffe000]" />
          <Sep />
          <IconItem w={78} icon={<MonitorIcon c={YEL} />} label="个股情报" color="text-[#ffe000]" />
          <Sep />
          <IconItem w={78} icon={<FlameIcon />} label="热点主题" color="text-[#ffe000]" />
          <Sep />
          <IconItem w={76} icon={<CoinIcon />} label="盈利预测" color="text-[#ffe000]" />
          <Sep />
        </div>
      </div>
    </header>
  );
}

const LBL = "#8aa2c4";
const R = "#ff4040";
const G = "#20c820";
const W = "#b8c4d0";

type Row = [string, string, string, string?, string?, string?, string?];

function QuoteRow({ r }: { r: Row }) {
  const [l1, v1, c1, l2, v2, c2, lc] = r;
  return (
    <div className="flex h-[24px] items-center whitespace-nowrap pl-[4px] leading-none">
      <span className="w-[40px] text-[19px]" style={{ color: lc ?? LBL }}>{l1}</span>
      <span className="w-[142px] text-right tracking-[0.5px]" style={{ color: c1 }}>{v1}</span>
      <span className="ml-[9px] w-[40px] text-[19px]" style={{ color: LBL }}>{l2}</span>
      <span className="flex-1 text-right tracking-[0.5px]" style={{ color: c2 }}>{v2}</span>
    </div>
  );
}

const trades: [string, string, string, string, string][] = [
  ["14:56", "123.92", "↑", "127", G], [":27", "123.93", "↑", "34", R], [":30", "123.93", "", "20", G], [":33", "123.93", "", "37", G],
  [":36", "123.93", "", "15", R], [":39", "123.93", "", "25", R], [":42", "123.92", "↓", "19", G], [":45", "123.92", "", "8", R],
  [":48", "123.90", "↓", "80", G], [":51", "123.92", "↑", "11", R], [":54", "123.91", "↓", "8", G], [":57", "123.91", "", "7", R],
  ["14:57", "123.91", "", "16", R], ["15:00", "123.93", "↑", "1173", R],
];

const TickArrow = ({ up }: { up: boolean }) => (
  <svg viewBox="0 0 7 16" className="h-[16px] w-[7px]" fill="none" stroke={up ? R : G} strokeWidth={1.2}>
    {up ? <path d="M3.500 1v15M1 6l2.500-5L6 6" /> : <path d="M3.500 0v15M1 10l2.500 5L6 10" />}
  </svg>
);

function QuotePanel() {
  const sells: Row[] = [
    ["卖⑤", "123.97", R, "", "6", G], ["卖④", "123.96", R, "", "35", G], ["卖③", "123.95", R, "", "52", G], ["卖②", "123.94", R, "", "261", G], ["卖①", "123.93", R, "", "77", G],
  ];
  const buys: Row[] = [
    ["买①", "123.92", R, "", "136", R], ["买②", "123.91", R, "", "273", R], ["买③", "123.90", R, "", "88", R], ["买④", "123.89", R, "", "24", R], ["买⑤", "123.88", R, "", "161", R],
  ];
  const stats: Row[] = [
    ["最新", "123.93", R, "今开", "125.00", R, "#c8b878"], ["涨跌", "1.28", R, "前收", "122.65", W], ["涨停", "147.18", R, "跌停", "98.12", G], ["涨幅", "1.04%", R, "最高", "125.50", R],
    ["振幅", "2.85%", W, "最低", "122.01", G], ["总手", "11.21万", W, "量比", "1.00", W], ["外盘", "59928", R, "内盘", "52201", G],
  ];
  const info: Row[] = [
    ["换手", "1.22%", W, "股本", "16.00亿", W], ["市值", "1983亿", W, "流通", "9.22亿", W], ["收益", "5.25③", W, "市盈", "17.69", W], ["行业", "生物医药", W, "概念", "沪深300 ...", W, "#c8b878"],
  ];
  return (
    <section className="flex w-[382px] flex-col border-l border-t border-[#a00000] font-['Liberation_Serif','Noto_Sans_CJK_SC',serif] text-[20px] font-light">
      <div className="relative flex h-[27px] items-center border-b border-[#c00000] pl-[103px]">
        <div className="absolute left-[81px] top-[1px] flex flex-col items-center font-['Liberation_Sans',sans-serif] text-[12px] leading-[11px] text-[#e02020]">
          <span>R</span>
          <span>300</span>
        </div>
        <span className="tracking-[0.5px] text-[#c8c8a0]">300122</span>
        <span className="ml-[6px] text-[19px] tracking-[1px] text-[#a08a30]">智飞生物</span>
        <span className="tracking-[0.9px] text-[#98a0b0]">(2)</span>
      </div>
      <div className="flex h-[26px] items-center border-b border-[#c00000]">
        <div className="w-full"><QuoteRow r={["委比", "-2.60%", G, "委差", "-33", G]} /></div>
      </div>
      <div className="border-b border-[#c00000] pb-px">{sells.map((r) => <QuoteRow key={r[0]} r={r} />)}</div>
      <div className="border-b border-[#c00000] pb-px">{buys.map((r) => <QuoteRow key={r[0]} r={r} />)}</div>
      <div className="border-b border-[#c00000] pb-px">{stats.map((r) => <QuoteRow key={r[0]} r={r} />)}</div>
      <div className="border-b border-[#c00000]">{info.map((r) => <QuoteRow key={r[0]} r={r} />)}</div>
      <div className="flex flex-1 border-b border-[#c00000]">
        <div className="flex-1">
          {trades.map((t, i) => (
            <div key={i} className={`flex h-[24px] items-center whitespace-nowrap leading-none ${i === 11 || i === 12 ? "border-b border-dotted border-[#8a2020]" : ""}`}>
              <span className="w-[52px] text-right tracking-[0.5px] text-[#b8c4d0]">{t[0]}</span>
              <span className="w-[148px] text-right tracking-[0.5px] text-[#ff4040]">{t[1]}</span>
              <span className="ml-[7px] flex w-[7px] justify-center">{t[2] && <TickArrow up={t[2] === "↑"} />}</span>
              <span className="flex-1 pr-[3px] text-right tracking-[0.5px]" style={{ color: t[4] }}>{t[3]}</span>
            </div>
          ))}
        </div>
        <div className="flex w-[9px] flex-col border-l border-[#a00000]">
          <div className="h-[15px] border-b border-[#a00000]" />
          <div className="flex h-[15px] items-end justify-center border-b border-[#a00000] text-[9px] leading-none text-[#a01010]">▲</div>
          <div className="h-[165px]" />
          <div className="h-[145px] bg-[repeating-linear-gradient(#a01010_0_1px,#5a0808_1px_3px)]" />
          <div className="flex h-[15px] justify-center text-[9px] leading-none text-[#a01010]">▼</div>
        </div>
      </div>
    </section>
  );
}

const watch: [string, boolean][] = [
  ["最近浏览", true], ["重庆", true], ["MSCI", false], ["百元股", true], ["融资融券", true], ["生物疫苗", true], ["沪深", true], ["生物医药", true], ["自选", true], ["股票板块", true],
];

export default function App() {
  return (
    <div className="flex h-[997px] w-[1915px] flex-col overflow-hidden bg-black font-['Liberation_Sans','Noto_Sans_CJK_SC',sans-serif]">
      <TopBar />
      <div className="flex h-[922px]">
        <Sidebar />
        <div className="w-[3px] bg-[#565b60]" />
        <main className="flex w-[1300px] flex-col">
          <div className="mt-[1px] h-[5px] border-y border-[#a00000]" />
          <PeriodBar />
          <div className="relative">
            <MainChart />
            <div className="absolute left-[3px] top-[3px] flex h-[19px] items-center whitespace-nowrap text-[14px]">
              <span className="text-[#f0e8b0]">智飞生物</span>
              <span className="ml-[7px] text-[#b0b0b0]">海王星策略(97,13,2)</span>
              <span className="ml-[11px] text-[#f0f0f0]">前高线 179.2</span>
              <span className="ml-[8px] text-[#f00000]">生命线 128.780↓</span>
              <span className="ml-[10px] text-[#f0f000]">护城河 118.836↓</span>
              <span className="ml-[8px] text-[#f0f0f0]">LUP 143.929↓</span>
            </div>
            <div className="absolute left-[2px] top-[26px] flex whitespace-nowrap text-[16px] leading-[20px] text-[#00ffff]">
              {watch.map(([t, cjk], i) => (
                <span key={t}>
                  <span className={cjk ? "tracking-[1.8px]" : ""}>{t}</span>
                  {t === "沪深" ? "300" : ""}
                  {i < watch.length - 1 ? <span className="mr-[1.6px]">,</span> : ""}
                </span>
              ))}
            </div>
          </div>
          <TimeAxis />
          <WaterPane />
          <VolumePane />
          <HoldPane />
          <AlertPane />
        </main>
        <QuotePanel />
      </div>
    </div>
  );
}
